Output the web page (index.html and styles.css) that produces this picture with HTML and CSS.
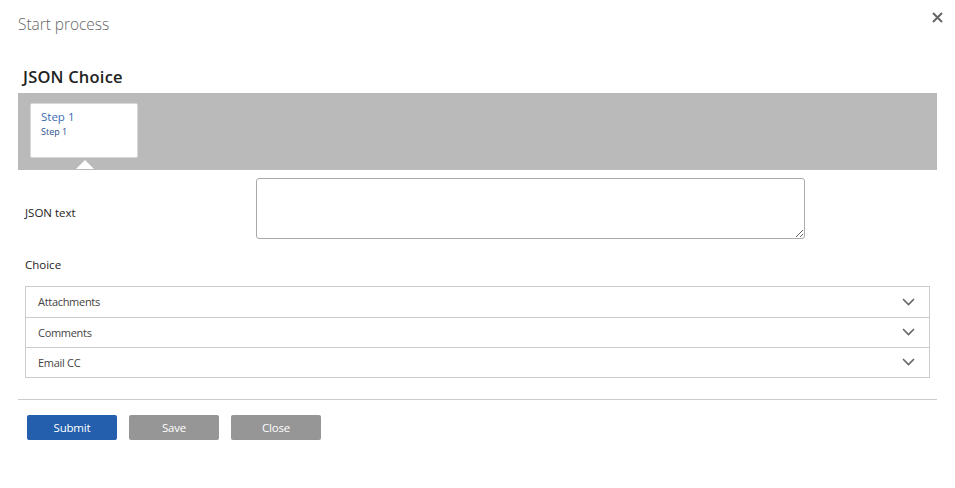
FILE: index.html
```html
<!DOCTYPE html>
<html>
<head>
<meta charset="utf-8">
<link rel="stylesheet" href="styles.css">
</head>
<body>
<div class="dialog">
  <div class="header">
    <div class="title">Start process</div>
    <button class="x" aria-label="Close">
      <svg width="11" height="11" viewBox="0 0 11 11"><path d="M1 1 L10 10 M10 1 L1 10" stroke="#666" stroke-width="2"/></svg>
    </button>
  </div>
  <h1 class="form-title">JSON Choice</h1>
  <div class="steps">
    <div class="step">
      <div class="step-name">Step 1</div>
      <div class="step-sub">Step 1</div>
    </div>
  </div>
  <div class="field-row">
    <label class="label">JSON text</label>
    <textarea class="textarea"></textarea>
  </div>
  <div class="label choice-label">Choice</div>
  <div class="accordion">
    <div class="acc-row"><span>Attachments</span><svg class="chev" width="13" height="8" viewBox="0 0 13 8"><path d="M1 1 L6.5 6.5 L12 1" fill="none" stroke="#666" stroke-width="1.6"/></svg></div>
    <div class="acc-row"><span>Comments</span><svg class="chev" width="13" height="8" viewBox="0 0 13 8"><path d="M1 1 L6.5 6.5 L12 1" fill="none" stroke="#666" stroke-width="1.6"/></svg></div>
    <div class="acc-row"><span>Email CC</span><svg class="chev" width="13" height="8" viewBox="0 0 13 8"><path d="M1 1 L6.5 6.5 L12 1" fill="none" stroke="#666" stroke-width="1.6"/></svg></div>
  </div>
  <div class="footer">
    <button class="btn primary">Submit</button>
    <button class="btn">Save</button>
    <button class="btn">Close</button>
  </div>
</div>
</body>
</html>
```
FILE: styles.css
```css
* { box-sizing: border-box; }
body {
  margin: 0;
  background: #fff;
  font-family: "Open Sans", "Noto Sans", sans-serif;
  color: #333;
}
.dialog {
  padding: 0 18px;
}
.header {
  display: flex;
  justify-content: space-between;
  align-items: flex-start;
  height: 52px;
}
.title {
  margin-top: 13px;
  font-size: 15.5px;
  font-weight: 300;
  color: #666;
  letter-spacing: -0.05px;
}
.x {
  margin-top: 12px;
  margin-right: -6px;
  padding: 0;
  border: 0;
  background: none;
  width: 11px;
  height: 11px;
}
.x svg { display: block; }
.form-title {
  margin: 0 0 0 5px;
  height: 41px;
  padding-top: 15px;
  font-size: 16.5px;
  font-weight: 600;
  color: #222;
  line-height: 20px;
  letter-spacing: 0.2px;
}
.steps {
  background: #bababa;
  height: 77px;
  padding: 10px 12px;
  position: relative;
}
.step {
  width: 108px;
  height: 55px;
  background: #fff;
  border: 1px solid #d8d8d8;
  border-radius: 2px;
  padding: 5px 10px;
  position: relative;
}
.step::after {
  content: "";
  position: absolute;
  left: 45px;
  bottom: -12px;
  border-left: 9px solid transparent;
  border-right: 9px solid transparent;
  border-bottom: 9px solid #fff;
}
.step-name {
  font-size: 11.5px;
  color: #3a6ab8;
  line-height: 16px;
}
.step-sub {
  font-size: 9px;
  color: #2d4f8a;
  line-height: 14px;
}
.field-row {
  display: flex;
  align-items: center;
  margin-top: 8px;
  padding-left: 7px;
}
.label {
  font-size: 11.5px;
  color: #222;
  letter-spacing: 0;
}
.field-row .label {
  width: 231px;
  padding-top: 8px;
}
.textarea {
  width: 549px;
  height: 61px;
  border: 1px solid #aaa;
  border-radius: 3px;
  resize: vertical;
  margin: 0;
  font-family: inherit;
}
.choice-label {
  margin-top: 18px;
  padding-left: 7px;
  line-height: 16px;
}
.accordion {
  margin: 13px 7px 0 7px;
  border: 1px solid #ccc;
}
.acc-row {
  display: flex;
  justify-content: space-between;
  align-items: center;
  height: 30.3px;
  padding: 0 14px 0 12px;
  font-size: 11px;
  color: #444;
  letter-spacing: -0.3px;
  border-top: 1px solid #ccc;
}
.acc-row:first-child { border-top: 0; height: 29.5px; }
.footer {
  margin-top: 21px;
  border-top: 1px solid #ccc;
  padding: 15px 9px;
  display: flex;
  gap: 12px;
}
.btn {
  width: 90px;
  height: 25px;
  border: 0;
  border-radius: 2px;
  background: #969696;
  color: #fff;
  font-family: inherit;
  font-size: 11.5px;
  letter-spacing: -0.2px;
  padding: 0;
}
.btn.primary { background: #245fae; }
```
